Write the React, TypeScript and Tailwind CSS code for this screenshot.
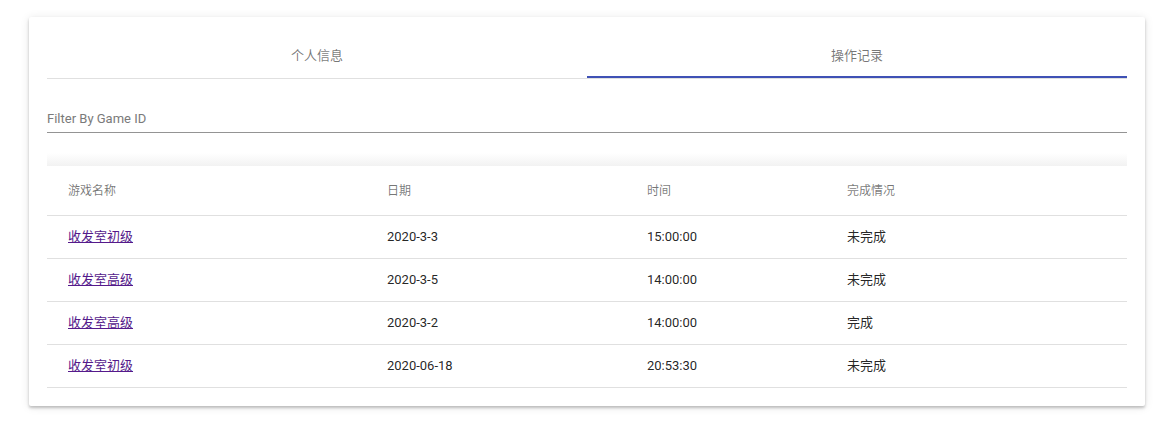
import { useState } from 'react';

interface GameRecord {
  id: number;
  name: string;
  date: string;
  time: string;
  status: string;
}

const records: GameRecord[] = [
  { id: 1, name: '收发室初级', date: '2020-3-3', time: '15:00:00', status: '未完成' },
  { id: 2, name: '收发室高级', date: '2020-3-5', time: '14:00:00', status: '未完成' },
  { id: 3, name: '收发室高级', date: '2020-3-2', time: '14:00:00', status: '完成' },
  { id: 4, name: '收发室初级', date: '2020-06-18', time: '20:53:30', status: '未完成' },
];

const font = "font-['Roboto','Noto_Sans_CJK_SC',sans-serif]";

export default function App() {
  const [tab, setTab] = useState(1);
  const [filter, setFilter] = useState('');

  const rows = records.filter((r) => !filter || String(r.id).includes(filter));

  return (
    <div className={`w-[1172px] h-[442px] bg-white pt-[17px] pl-[29px] ${font}`}>
      <div className="w-[1116px] bg-white px-[18px] pt-[13px] pb-[18px] rounded-[2px] shadow-[0_2px_3px_rgba(0,0,0,0.22),0_1px_10px_rgba(0,0,0,0.1)]">
        {/* Tabs */}
        <div className="flex border-b border-[#e0e0e0]">
          {['个人信息', '操作记录'].map((label, i) => (
            <button
              key={label}
              onClick={() => setTab(i)}
              className="relative flex-1 h-[48px] flex items-center justify-center text-[13px] text-[rgba(0,0,0,0.54)]"
            >
              <span className="mt-[3px]">{label}</span>
              {tab === i && (
                <span className="absolute left-0 right-0 bottom-0 h-[2px] bg-[#3f51b5]" />
              )}
            </button>
          ))}
        </div>

        {/* Filter */}
        <div className="mt-[22px] border-b border-[#949494]">
          <input
            value={filter}
            onChange={(e) => setFilter(e.target.value)}
            placeholder="Filter By Game ID"
            className="w-full h-[31px] pt-[4px] text-[13px] text-[#222] outline-none placeholder:text-[#7a7a7a]"
          />
        </div>

        {/* Table */}
        <div className="mt-[20px] h-[13px] bg-gradient-to-b from-white to-[#f2f2f2]" />
        <div className="bg-white">
          <div className="grid grid-cols-[340px_260px_200px_1fr] h-[50px] items-center border-b border-[#e0e0e0] text-[12px] text-[rgba(0,0,0,0.54)]">
            <div className="pl-[21px]">游戏名称</div>
            <div>日期</div>
            <div>时间</div>
            <div>完成情况</div>
          </div>
          {rows.map((r) => (
            <div
              key={r.id}
              className="grid grid-cols-[340px_260px_200px_1fr] h-[43px] items-center border-b border-[#e0e0e0] text-[13px] text-[rgba(0,0,0,0.87)]"
            >
              <div className="pl-[21px]">
                <a href="#" className="text-[#551a8b] underline">
                  {r.name}
                </a>
              </div>
              <div>{r.date}</div>
              <div>{r.time}</div>
              <div>{r.status}</div>
            </div>
          ))}
        </div>
      </div>
    </div>
  );
}
